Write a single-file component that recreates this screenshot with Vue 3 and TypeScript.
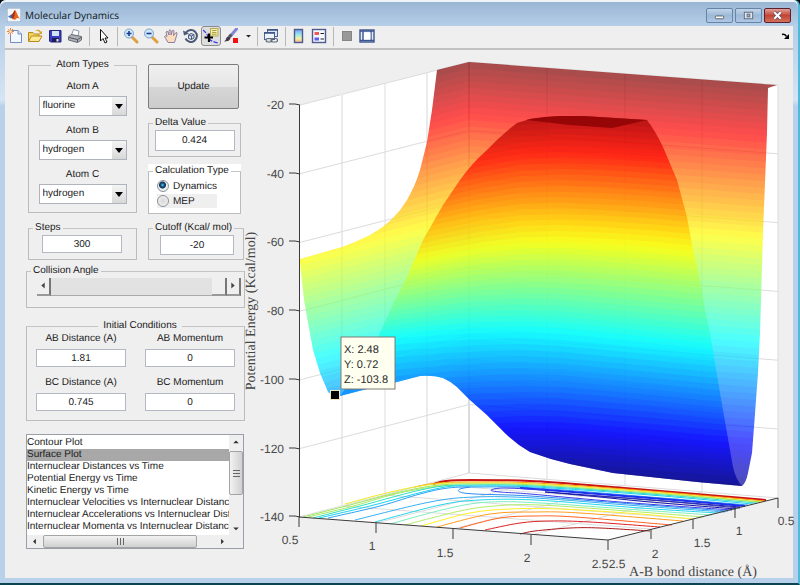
<script setup lang="ts">
import { ref } from 'vue'

type Point = [number, number]

const elements = ['fluorine', 'hydrogen', 'chlorine', 'deuterium']
const atoms = ref([
  { id: 'atom-a', label: 'Atom A', value: 'fluorine' },
  { id: 'atom-b', label: 'Atom B', value: 'hydrogen' },
  { id: 'atom-c', label: 'Atom C', value: 'hydrogen' },
])

const delta = ref('0.424')
const steps = ref('300')
const cutoff = ref('-20')
const calculation = ref('Dynamics')
const angle = ref(180)

const conditions = ref([
  { id: 'ab-distance', label: 'AB Distance (A)', value: '1.81' },
  { id: 'ab-momentum', label: 'AB Momentum', value: '0' },
  { id: 'bc-distance', label: 'BC Distance (A)', value: '0.745' },
  { id: 'bc-momentum', label: 'BC Momentum', value: '0' },
])

const plots = [
  'Contour Plot',
  'Surface Plot',
  'Internuclear Distances vs Time',
  'Potential Energy vs Time',
  'Kinetic Energy vs Time',
  'Internuclear Velocities vs Internuclear Distance',
  'Internuclear Accelerations vs Internuclear Distance',
  'Internuclear Momenta vs Internuclear Distance',
]
const selectedPlot = ref('Surface Plot')

// Jet colour map, t from 0 (lowest energy) to 1 (highest)
function jet(t: number): string {
  const channel = (centre: number) =>
    Math.round(255 * Math.max(0, Math.min(1, 1.5 - Math.abs(4 * t - centre))))
  return `rgb(${channel(3)}, ${channel(2)}, ${channel(1)})`
}

interface Column {
  x: number
  ys: number[]
}

const stops = [1, 0.875, 0.625, 0.375, 0.125, 0]

function heightAt(column: Column, t: number): number {
  for (let i = 0; i < stops.length - 1; i++) {
    if (t >= stops[i + 1]) {
      const f = (stops[i] - t) / (stops[i] - stops[i + 1])
      return column.ys[i] + f * (column.ys[i + 1] - column.ys[i])
    }
  }
  return column.ys[stops.length - 1]
}

function makeBands(columns: Column[]) {
  const count = 64
  return Array.from({ length: count }, (_, i) => {
    const t = 1 - i / count
    const top = columns.map((c) => `${c.x},${i === 0 ? 40 : heightAt(c, t).toFixed(1)}`)
    const last = columns[columns.length - 1].x
    return {
      points: `${top.join(' ')} ${last},520 ${columns[0].x},520`,
      fill: jet(1 - (i + 0.5) / count),
    }
  })
}

const wall = (x: number, top: number): Column => ({ x, ys: stops.map((s) => top + (1 - s) * 413) })
const backBands = makeBands([wall(295, 106), wall(469, 62), wall(785, 86)])
const frontBands = makeBands([
  { x: 295, ys: [175, 222, 290, 352, 450, 500] },
  { x: 400, ys: [136, 183, 263, 338, 439, 489] },
  { x: 440, ys: [124, 171, 255, 335, 434, 484] },
  { x: 480, ys: [114, 161, 248, 333, 430, 479] },
  { x: 520, ys: [108, 154, 243, 332, 428, 476] },
  { x: 560, ys: [105, 152, 242, 334, 428, 475] },
  { x: 600, ys: [106, 153, 244, 338, 431, 477] },
  { x: 650, ys: [109, 156, 247, 343, 435, 481] },
  { x: 700, ys: [114, 160, 252, 348, 440, 486] },
  { x: 785, ys: [121, 167, 259, 356, 447, 493] },
])

// Smooth path through the points (Catmull-Rom)
function smooth(points: Point[]): string {
  let d = `M${points[0].join(' ')}`
  for (let i = 0; i < points.length - 1; i++) {
    const p0 = points[Math.max(0, i - 1)]
    const p1 = points[i]
    const p2 = points[i + 1]
    const p3 = points[Math.min(points.length - 1, i + 2)]
    const c1 = [p1[0] + (p2[0] - p0[0]) / 6, p1[1] + (p2[1] - p0[1]) / 6]
    const c2 = [p2[0] - (p3[0] - p1[0]) / 6, p2[1] - (p3[1] - p1[1]) / 6]
    d += `C${[...c1, ...c2, ...p2].map((n) => n.toFixed(1)).join(' ')}`
  }
  return d
}

const lowerEdge =
  'L742 486L697 482L613 473L570 464Q549 459 530 452Q513 442 500 428L487 415L470 400L457 387Q450 381 443 378Q433 375 420 376L397 382L363 390L340 396'
const backShape =
  'M300 259L342 247Q356 242 370 235Q384 227 393 218Q401 210 407 200Q416 184 420 170L427 142L432 110L437 70L469 62L777 85L768 88L767 133L765 183L763 233L761 300L760 333L758 373L754 427L752 453L748 473Q746 483 742 486' +
  lowerEdge +
  'Q332 396 328 392L320 373L313 350L307 317L304 300L300 263Z'
const frontShape =
  'M340 396L355 375L378 337L395 300L407 277L423 240L443 205L460 180Q472 163 487 150Q502 134 517 123L530 119L563 116L583 116L647 120Q656 132 663 147L677 180L687 217L693 250L700 280L705 310L710 333L720 393L727 433L733 467Q736 480 742 486' +
  lowerEdge +
  'Z'

const contours: { color: string; width?: number; points: Point[] }[] = [
  { color: '#c81414', width: 2, points: [[433, 484], [446, 481], [470, 480], [530, 481], [600, 486], [766, 500]] },
  { color: '#ff9a00', points: [[415, 487], [438, 483], [475, 482], [535, 483], [650, 491], [765, 501]] },
  { color: '#f0e820', points: [[345, 504], [395, 491], [435, 484], [475, 483], [535, 484], [650, 492], [762, 502]] },
  { color: '#9ee85a', points: [[303, 517], [350, 505], [400, 492], [440, 485], [480, 484], [535, 485], [650, 493], [760, 502]] },
  { color: '#a8e868', points: [[308, 517], [350, 507], [395, 494], [432, 487], [450, 485]] },
  { color: '#30e0c0', points: [[313, 518], [360, 506], [430, 488], [475, 485], [535, 486], [650, 494], [757, 503]] },
  { color: '#18d0f4', points: [[319, 518], [370, 506], [440, 488], [475, 486], [535, 487], [650, 495], [753, 504]] },
  { color: '#28a0f4', points: [[328, 518], [380, 506], [420, 494], [448, 488], [480, 487], [535, 488], [650, 497], [748, 505]] },
  { color: '#1c30f0', width: 2, points: [[520, 488], [560, 491], [650, 498], [745, 506]] },
  { color: '#1010a8', points: [[740, 507], [650, 500], [546, 492], [600, 497], [650, 502], [736, 509]] },
  { color: '#3a3aea', points: [[545, 490], [505, 488], [491, 490], [500, 492], [530, 494], [620, 502], [732, 510]] },
  { color: '#2c8cf0', points: [[470, 487], [460, 489], [460, 492], [475, 494], [530, 496], [620, 503], [728, 511]] },
  { color: '#3030b8', points: [[580, 495], [640, 499], [740, 508]] },
  { color: '#38aef4', points: [[355, 520], [430, 502], [475, 497], [535, 498], [640, 506], [725, 512]] },
  { color: '#22d6ee', points: [[375, 522], [440, 505], [480, 500], [535, 500], [640, 508], [718, 513]] },
  { color: '#7ceec0', points: [[390, 524], [450, 508], [490, 502], [540, 503], [640, 510], [712, 515]] },
  { color: '#b4ee66', points: [[405, 525], [460, 511], [495, 506], [540, 505], [640, 512], [703, 517]] },
  { color: '#fff022', points: [[421, 526], [470, 513], [510, 509], [560, 509], [640, 514], [693, 519]] },
  { color: '#ff9c1c', points: [[437, 527], [490, 514], [535, 512], [580, 513], [683, 521]] },
  { color: '#ff6420', points: [[460, 528], [500, 518], [535, 516], [575, 517], [672, 525]] },
  { color: '#dc2020', points: [[485, 530], [520, 523], [550, 521], [590, 522], [660, 527]] },
  { color: '#a81818', points: [[520, 534], [535, 531], [570, 528], [600, 528], [650, 531]] },
]

const energyTicks = [-20, -40, -60, -80, -100, -120, -140].map((label, i) => ({
  label,
  y: Math.round(105 + i * 68.7),
}))
const gridRows = [1, 2, 3, 4, 5].map((i) => ({
  left: 105 + i * 68.7,
  corner: 62 + i * 68.5,
  right: 85 + i * 68.8,
}))
const frontTicks: Point[] = [[299, 517], [376, 523], [453, 529], [531, 535], [608, 540]]
const sideTicks: Point[] = [[651, 529], [693, 519], [735, 508], [778, 498]]
const axisLabels = [
  { text: '0.5', x: 290, y: 544 },
  { text: '1', x: 372, y: 550 },
  { text: '1.5', x: 445, y: 557 },
  { text: '2', x: 527, y: 562 },
  { text: '2.5', x: 600, y: 568 },
  { text: '2.5', x: 617, y: 568 },
  { text: '2', x: 655, y: 558 },
  { text: '1.5', x: 702, y: 547 },
  { text: '1', x: 739, y: 535 },
  { text: '0.5', x: 786, y: 525 },
]
</script>

<template>
  <div class="window">
    <header class="titlebar">
      <svg class="app-icon" viewBox="0 0 14 14" aria-hidden="true">
        <rect width="14" height="14" fill="#f2f6fb" stroke="#8b9db5" />
        <path d="M1 8.500L4.500 6.500L7 9L4 10.500Z" fill="#3a78b8" />
        <path d="M4.500 6.500C6 6 6.500 3 8 2L9 9L6 11.500L4.500 9.500Z" fill="#a03020" />
        <path d="M8 2C9.500 3 10.500 8 13 11C11 9.500 10 9.500 8 12L6 11C7.500 9 8 6 8 2Z" fill="#e8651c" />
      </svg>
      <h1>Molecular Dynamics</h1>
      <div class="caption-buttons">
        <button type="button" class="caption" aria-label="Minimize">
          <svg viewBox="0 0 26 14"><rect x="8.500" y="7.500" width="9" height="3" rx="1" fill="#f8f8f0" stroke="#56606c" /></svg>
        </button>
        <button type="button" class="caption" aria-label="Maximize">
          <svg viewBox="0 0 26 14"><rect x="8.500" y="3.500" width="9" height="7" fill="#e4eaf0" stroke="#5c6a7c" /><rect x="11.500" y="5.500" width="3" height="3" fill="#9fb4cc" stroke="#5c6a7c" /></svg>
        </button>
        <button type="button" class="caption close" aria-label="Close">
          <svg viewBox="0 0 26 14"><path d="M9.500 3.500L16.500 10.500M16.500 3.500L9.500 10.500" stroke="#5c5060" stroke-width="4" /><path d="M9.500 3.500L16.500 10.500M16.500 3.500L9.500 10.500" stroke="#fff" stroke-width="2.200" /></svg>
        </button>
      </div>
    </header>

    <div class="client">
      <nav class="toolbar" aria-label="Figure tools">
        <button type="button" aria-label="New figure">
          <svg viewBox="0 0 16 16"><path d="M3.500 2.500H11L14.500 6V14.500H3.500Z" fill="#f4f8ff" stroke="#6f8fc4" /><path d="M11 2.500V6H14.500" fill="#cfdcf2" stroke="#6f8fc4" /><path d="M1 1.500L6 5.500M6 1L1 6M3.500 0V7M0 3.500H7" stroke="#e8834a" /><circle cx="3.500" cy="3.500" r="1.200" fill="#fff0b0" /></svg>
        </button>
        <button type="button" aria-label="Open file">
          <svg viewBox="0 0 16 16"><path d="M1.500 13V4.500H6L7.500 6H12V13Z" fill="#f2d35c" stroke="#b88a1e" /><path d="M1.500 13.500L4.500 8H15L12 13.500Z" fill="#ffe994" stroke="#b88a1e" /><path d="M8 3Q12 0 14 4L15 2.500V6H11.500L13 5Q11.500 2 8 3Z" fill="#d8a428" /></svg>
        </button>
        <button type="button" aria-label="Save figure">
          <svg viewBox="0 0 16 16"><path d="M2.500 2.500H14V14H3.500L2.500 13Z" fill="#3c3cc0" stroke="#24247c" /><rect x="5" y="3" width="7" height="5" fill="#cfe2fa" /><rect x="5" y="10" width="7" height="4" fill="#1d1d5a" /><rect x="9.500" y="11" width="2" height="2.500" fill="#eee" /></svg>
        </button>
        <button type="button" aria-label="Print figure">
          <svg viewBox="0 0 16 16"><path d="M4.500 7L6.500 1.500L12 3L11 8Z" fill="#fff" stroke="#8c98a8" /><path d="M1.500 9L4 6.500L14.500 8.500V12L10.500 14.500L1.500 12Z" fill="#aeb2b8" stroke="#686c74" /><path d="M2 9.500L10.500 11.500L14 9.500M10.500 11.500V14" stroke="#54585e" fill="none" /></svg>
        </button>
        <i class="separator"></i>
        <button type="button" aria-label="Edit plot">
          <svg viewBox="0 0 16 16"><path d="M5.500 1.500V13L8 10.500L10 15L12 14L10 10H13Z" fill="#fff" stroke="#111" /></svg>
        </button>
        <i class="separator"></i>
        <button type="button" aria-label="Zoom in">
          <svg viewBox="0 0 16 16"><path d="M9 9L14 14" stroke="#e0a040" stroke-width="3" stroke-linecap="round" /><circle cx="6" cy="5.500" r="4.500" fill="#cfe8fa" stroke="#7aa2cc" /><path d="M3.500 5.500H8.500M6 3V8" stroke="#223a90" stroke-width="1.600" /></svg>
        </button>
        <button type="button" aria-label="Zoom out">
          <svg viewBox="0 0 16 16"><path d="M9 9L14 14" stroke="#e0a040" stroke-width="3" stroke-linecap="round" /><circle cx="6" cy="5.500" r="4.500" fill="#cfe8fa" stroke="#7aa2cc" /><path d="M3.500 5.500H8.500" stroke="#223a90" stroke-width="1.600" /></svg>
        </button>
        <button type="button" aria-label="Pan">
          <svg viewBox="0 0 16 16"><path d="M5 14.500L1.500 8.500Q2 7 4 8.500L3 4Q3.500 2.500 5 4L6 7L6 2.500Q7 1 8 2.500V7L9.500 2.500Q11 1.500 11 3.500L10.500 7.500L13 4.500Q14.500 4.500 14 6L11.500 14.500Z" fill="#fbdcbc" stroke="#8a7fa4" /></svg>
        </button>
        <button type="button" aria-label="Rotate 3D">
          <svg viewBox="0 0 16 16"><path d="M3 4.500A6 6 0 1 1 2.500 10.500" fill="none" stroke="#4a5a78" stroke-width="2" /><path d="M0 2.500L1 7.500L6 5.500Z" fill="#4a5a78" /><path d="M5.500 7L8 5.500L11 6.500V10L8.500 11.500L5.500 10.500Z" fill="#cfdcf0" stroke="#4a5a78" /><path d="M5.500 7L8.500 8V11.500M8.500 8L11 6.500" fill="none" stroke="#4a5a78" /></svg>
        </button>
        <button type="button" class="pressed" aria-label="Data cursor" aria-pressed="true">
          <svg viewBox="0 0 16 16"><path d="M0 2Q4 5 5 9T15 15" fill="none" stroke="#3a3af0" stroke-dasharray="4 1.500" stroke-width="1.300" /><rect x="7.500" y="0.500" width="7.500" height="7.500" fill="#f4eeae" stroke="#b8ac58" /><path d="M9 2.500H13.500M9 4.500H13.500M9 6.200H13.500" stroke="#a09030" stroke-width="0.800" /><path d="M1.500 9.500H10M6 5.500V14" stroke="#000" stroke-width="2.200" /></svg>
        </button>
        <button type="button" aria-label="Brush data">
          <svg viewBox="0 0 16 16"><path d="M13.500 1L7.500 8" stroke="#7f86d4" stroke-width="3" stroke-linecap="round" /><path d="M8.500 6.500L6 9" stroke="#555" stroke-width="3" /><path d="M1 13.500Q3 12.500 3.500 9.500Q6 7.500 7.500 10Q7 13.500 1 13.500Z" fill="#443c48" /><rect x="10" y="10" width="5" height="5" fill="#f01010" /></svg>
        </button>
        <button type="button" class="arrow" aria-label="Brush options">
          <svg viewBox="0 0 12 16"><path d="M5 7H10L7.500 9.500Z" fill="#222" /></svg>
        </button>
        <i class="separator"></i>
        <button type="button" aria-label="Link plot">
          <svg viewBox="0 0 16 16"><rect x="4.500" y="1.500" width="10" height="7" fill="#dce8f8" stroke="#4c6494" /><rect x="1.500" y="4.500" width="10" height="7" fill="#eef4fc" stroke="#4c6494" /><path d="M1 5H12M4 2H15" stroke="#3c5484" stroke-width="1.600" /><rect x="3" y="10.500" width="6" height="3.500" rx="1.700" fill="#ddd" stroke="#5a6878" stroke-width="1.200" /><rect x="8" y="10.500" width="6.500" height="3.500" rx="1.700" fill="none" stroke="#5a6878" stroke-width="1.200" /></svg>
        </button>
        <i class="separator"></i>
        <button type="button" aria-label="Insert colorbar">
          <svg viewBox="0 0 16 16">
            <defs><linearGradient id="bar-colors" x2="0" y2="1"><stop offset="0" stop-color="#7d9cf2" /><stop offset="0.400" stop-color="#98e8ee" /><stop offset="0.700" stop-color="#f6f0a0" /><stop offset="1" stop-color="#f0b088" /></linearGradient></defs>
            <rect x="3.500" y="1.500" width="8" height="13" fill="url(#bar-colors)" stroke="#4c5c90" stroke-width="1.400" />
          </svg>
        </button>
        <button type="button" aria-label="Insert legend">
          <svg viewBox="0 0 16 16"><rect x="1.500" y="1.500" width="13" height="13" fill="#f6f8fc" stroke="#4c5c90" stroke-width="1.400" /><rect x="3.500" y="4" width="4.500" height="3" fill="#ee5a5a" /><rect x="3.500" y="9.500" width="4.500" height="3" fill="#5c5cf0" /><path d="M9.500 5.500H13M9.500 11H13" stroke="#222" /></svg>
        </button>
        <i class="separator"></i>
        <button type="button" aria-label="Hide plot tools">
          <svg viewBox="0 0 16 16"><rect x="3.500" y="3.500" width="9" height="9" fill="#989898" stroke="#858585" /></svg>
        </button>
        <button type="button" aria-label="Show plot tools">
          <svg viewBox="0 0 16 16"><rect x="1" y="2" width="14" height="12" fill="#e4ecf8" stroke="#3c5490" stroke-width="1.400" /><path d="M1 3H15M1 12.500H15M4 3V12.500M12 3V12.500" stroke="#3c5490" stroke-width="1.400" /><rect x="5" y="4.500" width="6.500" height="7" fill="#fff" /></svg>
        </button>
        <button type="button" class="dock" aria-label="Dock figure">
          <svg viewBox="0 0 16 16"><path d="M7 6.500Q10 5.500 11.500 8.500" fill="none" stroke="#000" stroke-width="1.600" /><path d="M14 6V11H9Z" fill="#000" /></svg>
        </button>
      </nav>

      <main class="content">
        <form class="sidebar" @submit.prevent>
          <div class="row">
            <fieldset class="atom-types">
              <legend class="centered">Atom Types</legend>
              <div v-for="atom in atoms" :key="atom.id" class="field">
                <label :for="atom.id">{{ atom.label }}</label>
                <span class="dropdown">
                  <select :id="atom.id" v-model="atom.value">
                    <option v-for="name in elements" :key="name">{{ name }}</option>
                  </select>
                </span>
              </div>
            </fieldset>

            <div class="stack">
              <button type="submit" class="update">Update</button>
              <fieldset class="tall">
                <legend><label for="delta">Delta Value</label></legend>
                <input id="delta" v-model="delta" type="text" />
              </fieldset>
              <div class="white-panel">
                <fieldset class="calculation">
                  <legend>Calculation Type</legend>
                  <label><input v-model="calculation" type="radio" name="calculation" value="Dynamics" />Dynamics</label>
                  <label class="shaded"><input v-model="calculation" type="radio" name="calculation" value="MEP" />MEP</label>
                </fieldset>
              </div>
            </div>
          </div>

          <div class="row second">
            <fieldset class="steps">
              <legend><label for="steps">Steps</label></legend>
              <input id="steps" v-model="steps" type="text" />
            </fieldset>
            <fieldset class="cutoff">
              <legend><label for="cutoff">Cutoff (Kcal/ mol)</label></legend>
              <input id="cutoff" v-model="cutoff" type="text" />
            </fieldset>
          </div>

          <fieldset class="collision">
            <legend><label for="angle">Collision Angle</label></legend>
            <div class="slider">
              <button type="button" aria-label="Decrease angle" @click="angle = Math.max(0, angle - 1)">
                <svg viewBox="0 0 14 18"><path d="M9 5V12L5 8.500Z" fill="#444" /></svg>
              </button>
              <input id="angle" v-model.number="angle" type="range" min="0" max="180" />
              <button type="button" aria-label="Increase angle" @click="angle = Math.min(180, angle + 1)">
                <svg viewBox="0 0 14 18"><path d="M5 5V12L9 8.500Z" fill="#444" /></svg>
              </button>
            </div>
          </fieldset>

          <fieldset class="initial">
            <legend class="centered">Initial Conditions</legend>
            <div v-for="item in conditions" :key="item.id" class="field">
              <label :for="item.id">{{ item.label }}</label>
              <input :id="item.id" v-model="item.value" type="text" />
            </div>
          </fieldset>

          <div class="listbox">
            <select v-model="selectedPlot" size="8" aria-label="Plot type">
              <option v-for="plot in plots" :key="plot">{{ plot }}</option>
            </select>
            <div class="scroll vertical">
              <svg viewBox="0 0 14 14"><path d="M4 9H10L7 6Z" fill="#333" /></svg>
              <span class="thumb"><i></i></span>
              <svg class="end" viewBox="0 0 14 14"><path d="M4 6H10L7 9Z" fill="#333" /></svg>
            </div>
            <div class="scroll horizontal">
              <svg viewBox="0 0 14 14"><path d="M9 4V10L6 7Z" fill="#333" /></svg>
              <span class="thumb"><i></i></span>
              <svg class="end" viewBox="0 0 14 14"><path d="M6 4V10L9 7Z" fill="#333" /></svg>
            </div>
          </div>
        </form>

        <svg class="plot" viewBox="245 50 548 528" role="img" aria-label="Potential energy surface">
          <defs>
            <clipPath id="back-clip"><path :d="backShape" /></clipPath>
            <clipPath id="front-clip"><path :d="frontShape" /></clipPath>
          </defs>

          <path d="M300 105L469 62L778 85V498L608 540L299 517Z" fill="#fff" />
          <g class="grid">
            <path d="M300 105L469 62L778 85V498L469 473L299 517" />
            <path class="corner" d="M469 62V473" />
            <path class="thick" d="M342 94V506M427 73V484" />
            <path d="M385 83V495M547 68V479M625 74V485M702 80V492" />
            <path d="M342 506L651 529M385 495L693 519M427 484L735 508" />
            <path d="M376 523L547 479M453 529L625 485M531 535L702 492" />
            <path v-for="row in gridRows" :key="row.left" :d="`M300 ${row.left}L469 ${row.corner}L778 ${row.right}`" />
          </g>

          <g class="contours">
            <path v-for="(line, i) in contours" :key="i" :d="smooth(line.points)" :stroke="line.color" :stroke-width="line.width ?? 1" />
          </g>

          <g clip-path="url(#back-clip)" opacity="0.7">
            <polygon v-for="(band, i) in backBands" :key="i" :points="band.points" :fill="band.fill" />
          </g>
          <g clip-path="url(#front-clip)" opacity="0.7">
            <polygon v-for="(band, i) in frontBands" :key="i" :points="band.points" :fill="band.fill" />
          </g>
          <path d="M526 120Q544 116 563 116H583L647 120L612 128L570 125Z" fill="#960606" />

          <g class="axes">
            <path d="M299.500 105V517M299 517L608 540L778 498" />
            <path v-for="tick in energyTicks" :key="tick.label" :d="`M289 ${tick.y - 1}H295L300 ${tick.y}`" />
            <path v-for="tick in frontTicks" :key="tick[0]" :d="`M${tick[0]} ${tick[1]}V${tick[1] + 10}`" />
            <path v-for="tick in sideTicks" :key="tick[0]" :d="`M${tick[0]} ${tick[1]}V${tick[1] + 10}`" />
          </g>
          <g class="tick-labels">
            <text v-for="tick in energyTicks" :key="tick.label" class="energy" x="284" :y="tick.y + 4">{{ tick.label }}</text>
            <text v-for="(label, i) in axisLabels" :key="i" :x="label.x" :y="label.y">{{ label.text }}</text>
          </g>
          <g class="axis-titles">
            <text x="693" y="576">A-B bond distance (Å)</text>
            <text transform="translate(255 311) rotate(-90)">Potential Energy (Kcal/mol)</text>
          </g>

          <g class="datatip">
            <rect x="330.500" y="390.500" width="9" height="9" class="halo" />
            <rect x="331" y="391" width="8" height="8" fill="#000" />
            <rect x="341" y="337" width="54" height="52" class="tip" />
            <text x="344" y="353">X: 2.48</text>
            <text x="344" y="368">Y: 0.72</text>
            <text x="344" y="383">Z: -103.8</text>
          </g>
        </svg>
      </main>
    </div>
  </div>
</template>

<style>
body {
  margin: 0;
  background: #061018;
}
</style>

<style scoped>
.window {
  display: flex;
  flex-direction: column;
  box-sizing: border-box;
  min-height: 100vh;
  padding: 0 5px 5px;
  background: linear-gradient(#98b4d2, #b6cee8 26px, #d6e4f4 100px, #b8d0ea 106px);
  border-right: 2px solid #50b8d8;
  border-bottom: 2px solid #0c4450;
  border-radius: 6px 6px 0 0;
  box-shadow: inset 0 2px 0 #eef4f8;
  font-family: "Liberation Sans", Arial, sans-serif;
  font-size: 10px;
  color: #1a1a1a;
  text-rendering: geometricPrecision;
}

.window * {
  box-sizing: border-box;
}

button,
input,
select {
  margin: 0;
  font: inherit;
  color: inherit;
  text-rendering: inherit;
}

.titlebar {
  display: flex;
  align-items: center;
  gap: 4px;
  height: 26px;
  padding: 4px 2px 0;
}

.app-icon {
  width: 14px;
  height: 14px;
}

h1 {
  margin: 0;
  font: 10px "Open Sans", "Noto Sans", sans-serif;
  color: #101820;
}

.caption-buttons {
  display: flex;
  gap: 2px;
  margin-left: auto;
}

.caption {
  width: 27px;
  height: 15px;
  padding: 0;
  border: 1px solid #6684a8;
  border-radius: 2px;
  background: linear-gradient(#c2d5ea, #9db9d8 50%, #b0c8e4);
}

.caption svg {
  display: block;
  width: 100%;
  height: 100%;
}

.close {
  border-color: #5c2030;
  background: linear-gradient(#e0a098, #c44434 50%, #d47058);
}

.client {
  display: flex;
  flex: 1;
  flex-direction: column;
  background: #efefef;
}

.toolbar {
  display: flex;
  align-items: center;
  height: 24px;
  padding-bottom: 2px;
  border-bottom: 2px solid #c2c2c2;
}

.toolbar button {
  display: grid;
  place-items: center;
  width: 20px;
  height: 20px;
  padding: 0;
  border: 0;
  background: none;
}

.toolbar svg {
  width: 16px;
  height: 16px;
}

.toolbar .pressed {
  border: 1px solid #8c8c8c;
  border-radius: 3px;
  background: #dedede;
}

.toolbar .arrow {
  width: 12px;
}

.toolbar .arrow svg {
  width: 12px;
}

.toolbar .dock {
  margin-left: auto;
}

.separator {
  width: 8px;
  height: 19px;
  background: linear-gradient(#b8b8b8, #b8b8b8) center / 1px 100% no-repeat;
}

.content {
  display: flex;
  flex: 1;
  align-items: flex-start;
}

.sidebar {
  flex: none;
  width: 240px;
  padding: 8px 0 0 21px;
}

.plot {
  display: block;
  flex: 1;
  min-width: 0;
  overflow: visible;
}

fieldset {
  min-width: 0;
  margin: 0;
  padding: 0;
  border: 1px solid #bcbcbc;
  border-top-color: #c4c4c4;
}

legend {
  height: 14px;
  margin-left: 4px;
  padding: 0 2px;
  line-height: 14px;
}

.centered {
  margin: 0 auto;
  padding: 0 5px;
}

input[type='text'] {
  display: block;
  width: 90px;
  height: 18px;
  padding: 0;
  border: 1px solid #b4b8c4;
  background: #fff;
  text-align: center;
}

.row {
  display: grid;
  grid-template-columns: 109px 93px;
  gap: 11px;
  padding-left: 2px;
}

.second {
  grid-template-columns: 109px 96px;
  margin-top: 7px;
}

.field {
  display: flex;
  flex-direction: column;
  align-items: center;
  line-height: 12px;
}

.atom-types {
  height: 155px;
}

.atom-types .field {
  gap: 3px;
  padding-top: 9px;
}

.dropdown {
  position: relative;
  display: block;
  width: 88px;
  height: 20px;
}

.dropdown::after {
  position: absolute;
  top: 8px;
  right: 4px;
  border: 4px solid transparent;
  border-top: 5px solid #000;
  border-bottom: 0;
  content: '';
  pointer-events: none;
}

.dropdown select {
  width: 100%;
  height: 100%;
  padding: 0 16px 0 3px;
  border: 1px solid #b0b4bc;
  border-radius: 0;
  appearance: none;
  background: linear-gradient(#f4f4f4, #d8d8d8) right / 14px 100% no-repeat, #fff;
}

.stack {
  display: flex;
  flex-direction: column;
  gap: 7px;
  padding-top: 6px;
}

.update {
  height: 45px;
  margin-right: 2px;
  border: 1px solid #7c7c7c;
  border-radius: 2px;
  background: linear-gradient(#f0f0f0, #e6e6e6 50%, #d6d6d6 51%, #cccccc);
}

.tall {
  height: 41px;
}

.tall input {
  width: 80px;
  height: 21px;
  margin: 0 auto;
}

.white-panel {
  background: #fff;
}

.calculation {
  height: 50px;
}

.calculation label {
  display: flex;
  align-items: center;
  gap: 4px;
  width: 60px;
  height: 14px;
  margin: 1px 0 0 8px;
}

.calculation .shaded {
  background: #efefef;
}

input[type='radio'] {
  width: 12px;
  height: 12px;
  border: 1px solid #8c9098;
  border-radius: 50%;
  appearance: none;
  background: radial-gradient(#d8d8d8, #f6f6f6);
}

input[type='radio']:checked {
  background: radial-gradient(circle at 45% 40%, #6cc4e8, #0e4c78 2px, #103050 3px, #e8eef2 4px);
}

.steps,
.cutoff {
  height: 39px;
}

.steps input {
  width: 80px;
  margin-left: 13px;
}

.cutoff input {
  width: 74px;
  height: 20px;
  margin-left: 11px;
}

.collision {
  height: 44px;
  margin-top: 4px;
}

.slider {
  display: flex;
  height: 18px;
  margin: 0 3px 0 10px;
}

.slider button {
  width: 14px;
  padding: 0;
  border: 0;
  border-right: 2px solid #777;
  border-bottom: 2px solid #999;
  background: #efefef;
}

.slider svg {
  display: block;
  width: 12px;
  height: 16px;
}

.slider input {
  flex: 1;
  min-width: 0;
  height: 18px;
  appearance: none;
  background: #e2e2e2;
  border-bottom: 1px solid #aaa;
}

.slider input::-webkit-slider-thumb {
  width: 15px;
  height: 18px;
  appearance: none;
  background: #efefef;
  border-right: 2px solid #777;
  border-bottom: 2px solid #999;
}

.initial {
  display: grid;
  grid-template-columns: 90px 90px;
  gap: 10px 19px;
  height: 102px;
  margin-top: 11px;
  padding-left: 9px;
  align-content: start;
}

.initial .field {
  gap: 4px;
}

.listbox {
  display: grid;
  grid-template: 100px 13px / 1fr 14px;
  width: 218px;
  margin-top: 13px;
  border: 1px solid #9a9ea6;
  background: #efefef;
}

.listbox select {
  min-width: 0;
  width: 100%;
  height: 100%;
  padding: 2px 0 0;
  border: 0;
  border-radius: 0;
  outline: 0;
  overflow: hidden;
  background: #fff;
}

.listbox option {
  min-height: 12px;
  height: 12px;
  padding: 0;
  line-height: 12px;
  color: #1a1a1a;
}

.listbox option:checked {
  background: linear-gradient(#a8a8a8, #a8a8a8);
  color: #1a1a1a;
}

.scroll {
  display: flex;
}

.scroll svg {
  flex: none;
  width: 14px;
  height: 13px;
}

.scroll .end {
  margin: auto 0 0 auto;
}

.vertical {
  flex-direction: column;
}

.thumb {
  display: grid;
  place-items: center;
  border: 1px solid #a4a4a4;
  border-radius: 2px;
}

.vertical .thumb {
  height: 44px;
  margin-top: 3px;
  background: linear-gradient(90deg, #f2f2f2, #d0d0d0);
}

.horizontal .thumb {
  width: 154px;
  margin-left: 2px;
  background: linear-gradient(#f2f2f2, #d0d0d0);
}

.thumb i {
  width: 7px;
  height: 7px;
}

.vertical i {
  background: repeating-linear-gradient(#666 0 1px, transparent 1px 3px);
}

.horizontal i {
  background: repeating-linear-gradient(90deg, #666 0 1px, transparent 1px 3px);
}

.grid path {
  fill: none;
  stroke: #dcdcdc;
}

.grid .thick {
  stroke: #ebebeb;
  stroke-width: 2px;
}

.grid .corner {
  stroke: #b8b8b8;
}

.contours path {
  fill: none;
}

.axes path {
  fill: none;
  stroke: #3a3a3a;
}

.tick-labels {
  fill: #484848;
  font-size: 12px;
  text-anchor: middle;
}

.tick-labels .energy {
  text-anchor: end;
}

.axis-titles {
  fill: #444;
  font-family: "Liberation Serif", "Times New Roman", serif;
  font-size: 14px;
  text-anchor: middle;
}

.datatip {
  fill: #2a2a2a;
  font-size: 11px;
}

.datatip .halo {
  fill: none;
  stroke: #f0e8c0;
}

.datatip .tip {
  fill: #fffff0;
  stroke: #7c7c74;
}
</style>
